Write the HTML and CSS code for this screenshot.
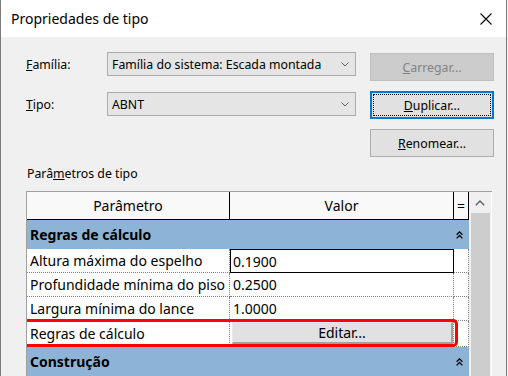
FILE: index.html
```html
<!DOCTYPE html>
<html lang="pt">
<head>
<meta charset="utf-8">
<title>Propriedades de tipo</title>
<link rel="stylesheet" href="styles.css">
</head>
<body>
<div class="window">
  <div class="titlebar">
    <span class="title">Propriedades de tipo</span>
    <svg class="close" viewBox="0 0 12 12" width="12" height="12"><path d="M0.5 0.5L11.5 11.5M11.5 0.5L0.5 11.5" stroke="#000" stroke-width="1.1" fill="none"/></svg>
  </div>
  <div class="content">
    <div class="form">
      <div class="lbl l1"><span><u>F</u>amília:</span></div>
      <div class="select s1"><span>Família do sistema: Escada montada</span><svg class="dd" viewBox="0 0 8 5" width="8" height="5"><polyline points="0.5,0.5 4,4 7.5,0.5" fill="none" stroke="#606060" stroke-width="1"/></svg></div>
      <div class="btn disabled"><span><u>C</u>arregar...</span></div>
      <div class="lbl l2"><span><u>T</u>ipo:</span></div>
      <div class="select s2"><span>ABNT</span><svg class="dd" viewBox="0 0 8 5" width="8" height="5"><polyline points="0.5,0.5 4,4 7.5,0.5" fill="none" stroke="#606060" stroke-width="1"/></svg></div>
      <div class="btn focused"><span class="ring"><span><u>D</u>uplicar...</span></span></div>
      <div class="btn b3"><span><u>R</u>enomear...</span></div>
    </div>
    <div class="section-label">Parâ<u>m</u>etros de tipo</div>
    <div class="table">
      <div class="grid">
        <div class="row hdr">
          <div class="hcell">Parâmetro</div>
          <div class="hcell">Valor</div>
          <div class="hcell">=</div>
        </div>
        <div class="group">
          <span>Regras de cálculo</span>
          <svg class="chev" viewBox="0 0 7 8" width="7" height="8"><polyline points="0.6,3.8 3.5,0.9 6.4,3.8" fill="none" stroke="#000" stroke-width="1.3"/><polyline points="0.6,7.4 3.5,4.5 6.4,7.4" fill="none" stroke="#000" stroke-width="1.3"/></svg>
        </div>
        <div class="row data">
          <div class="cell">Altura máxima do espelho</div>
          <div class="cell boxed">0.1900</div>
          <div class="cell"></div>
        </div>
        <div class="row data">
          <div class="cell">Profundidade mínima do piso</div>
          <div class="cell">0.2500</div>
          <div class="cell"></div>
        </div>
        <div class="row data">
          <div class="cell">Largura mínima do lance</div>
          <div class="cell">1.0000</div>
          <div class="cell"></div>
        </div>
        <div class="row data r4">
          <div class="cell">Regras de cálculo</div>
          <div class="cell btncell"><div class="edit">Editar...</div></div>
          <div class="cell"></div>
          <div class="highlight"></div>
        </div>
        <div class="group">
          <span>Construção</span>
          <svg class="chev" viewBox="0 0 7 8" width="7" height="8"><polyline points="0.6,3.8 3.5,0.9 6.4,3.8" fill="none" stroke="#000" stroke-width="1.3"/><polyline points="0.6,7.4 3.5,4.5 6.4,7.4" fill="none" stroke="#000" stroke-width="1.3"/></svg>
        </div>
      </div>
      <div class="scrollbar">
        <div class="sb-up"><svg viewBox="0 0 10 6" width="10" height="6"><polyline points="0.8,5.2 5,1 9.2,5.2" fill="none" stroke="#606060" stroke-width="1.4"/></svg></div>
        <div class="sb-thumb"></div>
      </div>
    </div>
  </div>
</div>
</body>
</html>
```

FILE: styles.css
```css
* { box-sizing: border-box; }
html, body { margin: 0; padding: 0; }
body {
  width: 508px;
  height: 376px;
  overflow: hidden;
  background: #f0f0f0;
  font-family: "Noto Sans", "Segoe UI", sans-serif;
  font-size: 12.3px;
  color: #000;
}
.window {
  width: 507px;
  height: 376px;
  overflow: hidden;
  border-left: 1px solid #7a7a7a;
  border-right: 1px solid #7a7a7a;
  display: flex;
  flex-direction: column;
}
.titlebar {
  height: 37px;
  flex: none;
  background: #fff;
  display: flex;
  align-items: center;
  justify-content: space-between;
  padding-left: 10px;
  padding-right: 14px;
}
.title { font-size: 14px; }
.close { display: block; }
.content {
  flex: 1;
  min-height: 0;
  background: #f0f0f0;
  padding: 16px 0 0 25px;
}
.form {
  display: grid;
  grid-template-columns: 67px 249px 124px;
  column-gap: 14px;
  grid-template-rows: repeat(3, 28px);
  row-gap: 10px;
}
.lbl {
  height: 24px;
  display: flex;
  align-items: center;
  align-self: start;
}
.l1, .s1 { margin-top: -1px; }
.l2, .s2 { margin-top: 1px; }
.select {
  height: 24px;
  min-width: 0;
  align-self: start;
  background: #e5e5e5;
  border: 1px solid #adadad;
  display: flex;
  align-items: center;
  justify-content: space-between;
  padding: 0 6px 0 4px;
  white-space: nowrap;
  overflow: hidden;
}
.dd { display: block; flex: none; }
.btn {
  grid-column: 3;
  height: 28px;
  background: #e1e1e1;
  border: 1px solid #adadad;
  display: flex;
  align-items: center;
  justify-content: center;
}
.disabled {
  background: #cccccc;
  border-color: #bfbfbf;
  color: #838383;
}
.focused {
  border: 2px solid #0078d7;
  padding: 1px;
}
.ring {
  width: 100%;
  height: 100%;
  border: 1px dotted #000;
  display: flex;
  align-items: center;
  justify-content: center;
}
.section-label {
  margin-top: 7px;
  line-height: 20px;
  height: 20px;
  padding-left: 1px;
}
.table {
  margin-top: 7px;
  width: 466px;
  height: 185px;
  overflow: hidden;
  display: flex;
  border-top: 1px solid #a0a0a0;
  border-left: 1px solid #a0a0a0;
  font-size: 14px;
}
.grid {
  width: 442px;
  background: #fff;
}
.row {
  display: grid;
  grid-template-columns: 203px 224px 15px;
}
.hdr { height: 28px; background: #f9f9f9; }
.hcell {
  border-right: 1px solid #000;
  border-bottom: 1px solid #000;
  display: flex;
  align-items: center;
  justify-content: center;
}
.group {
  height: 29px;
  background: #8db4d6;
  display: flex;
  align-items: center;
  justify-content: space-between;
  font-weight: bold;
  padding: 0 6px 0 3px;
}
.chev { display: block; }
.data { height: 24px; }
.cell {
  border-right: 1px dotted #808080;
  border-bottom: 1px dotted #808080;
  display: flex;
  align-items: center;
  padding-left: 3px;
  white-space: nowrap;
  overflow: hidden;
}
.boxed {
  border: 1px solid #000;
  padding-left: 2px;
}
.r4 { height: 26px; position: relative; }
.btncell { padding: 0; align-items: flex-start; }
.edit {
  margin: 1px 0 0 2px;
  width: 221px;
  height: 22px;
  background: #e1e1e1;
  border-style: solid;
  border-color: #e8e8e8 #a0a0a0 #a0a0a0 #e8e8e8;
  border-width: 1px 2px 2px 1px;
  display: flex;
  align-items: center;
  justify-content: center;
}
.highlight {
  position: absolute;
  left: -5px;
  top: -2px;
  width: 436px;
  height: 28px;
  border: 3px solid #ff0000;
  border-radius: 5px;
  pointer-events: none;
}
.scrollbar {
  width: 23px;
  background: #f0f0f0;
  border-right: 1px solid #fff;
  display: flex;
  flex-direction: column;
}
.sb-up {
  height: 21px;
  flex: none;
  display: flex;
  align-items: center;
  justify-content: center;
}
.sb-thumb {
  flex: 1;
  margin-left: 2px;
  width: 19px;
  background: #cdcdcd;
}
```
